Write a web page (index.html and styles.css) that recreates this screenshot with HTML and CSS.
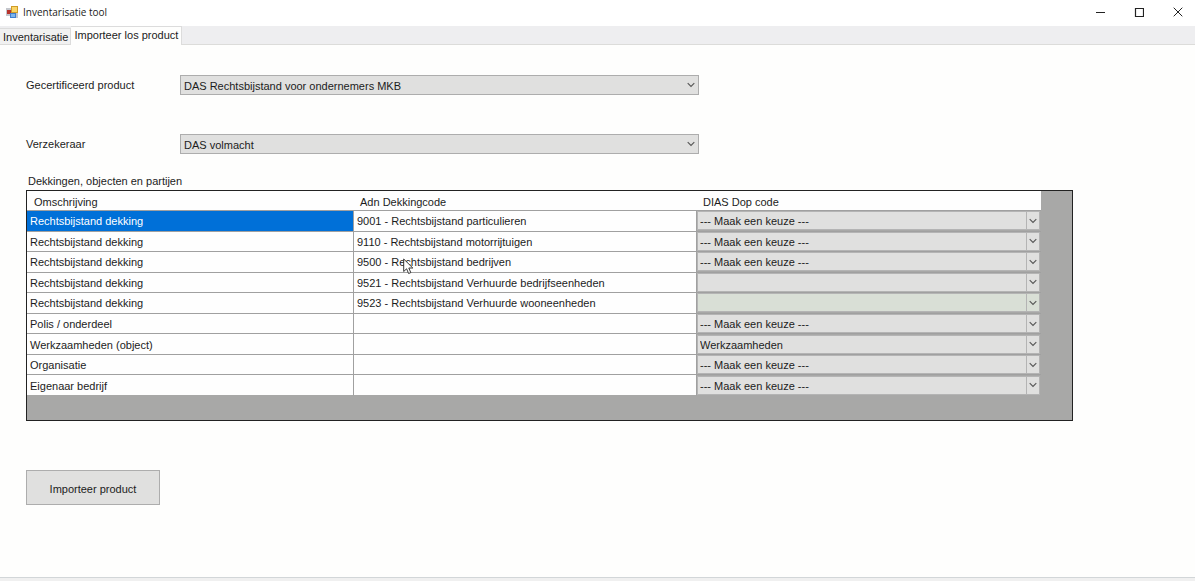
FILE: index.html
```html
<!DOCTYPE html>
<html lang="nl">
<head>
<meta charset="utf-8">
<title>Inventarisatie tool</title>
<link rel="stylesheet" href="styles.css">
</head>
<body>
<svg class="defs" aria-hidden="true"><symbol id="chevron" viewBox="0 0 8 6"><path d="M.7 1.200 4 4.500 7.300 1.200" fill="none" stroke="#555" stroke-width="1.100"/></symbol></svg>
<div class="window">
  <header class="titlebar">
    <svg class="app-icon" viewBox="0 0 12 12" aria-hidden="true">
      <rect x="0" y="2" width="6" height="8" fill="#c4c6cc"/>
      <rect x="1" y="4" width="4" height="4" fill="#b8342c"/>
      <rect x="5" y="0" width="7" height="7" fill="#cf9c28"/>
      <rect x="6" y="1" width="5" height="5" fill="#fbd667"/>
      <rect x="4" y="7" width="6" height="5" fill="#3f7fd0"/>
      <rect x="5" y="8" width="4" height="3" fill="#7db4ec"/>
      <rect x="10" y="7" width="2" height="5" fill="#c4c6cc"/>
    </svg>
    <h1 class="title">Inventarisatie tool</h1>
    <div class="window-controls">
      <button class="control" type="button" aria-label="Minimaliseren"><svg viewBox="0 0 10 10"><path d="M1 5.500h9" stroke="#222"/></svg></button>
      <button class="control" type="button" aria-label="Maximaliseren"><svg viewBox="0 0 10 10"><path d="M1.500 1.500h8v8h-8z" fill="none" stroke="#222" stroke-width="1.200"/></svg></button>
      <button class="control" type="button" aria-label="Sluiten"><svg viewBox="0 0 10 10"><path d="M.7.7 9.300 9.300M9.300.7.7 9.300" stroke="#222"/></svg></button>
    </div>
  </header>
  <nav class="tabs" role="tablist">
    <button class="tab" type="button" role="tab" aria-selected="false">Inventarisatie</button>
    <button class="tab tab-active" type="button" role="tab" aria-selected="true">Importeer los product</button>
  </nav>
  <main class="page">
    <div class="field">
      <label class="field-label" for="product">Gecertificeerd product</label>
      <div class="combo"><select id="product"><option>DAS Rechtsbijstand voor ondernemers MKB</option></select><svg class="chevron"><use href="#chevron"/></svg></div>
    </div>
    <div class="field">
      <label class="field-label" for="insurer">Verzekeraar</label>
      <div class="combo"><select id="insurer"><option>DAS volmacht</option></select><svg class="chevron"><use href="#chevron"/></svg></div>
    </div>
    <h2 class="grid-title" id="grid-title">Dekkingen, objecten en partijen</h2>
    <div class="grid">
      <table class="data" aria-labelledby="grid-title">
        <colgroup><col class="col-name"><col class="col-code"><col></colgroup>
        <thead><tr><th>Omschrijving</th><th>Adn Dekkingcode</th><th>DIAS Dop code</th></tr></thead>
        <tbody>
          <tr><td class="selected">Rechtsbijstand dekking</td><td>9001 - Rechtsbijstand particulieren</td><td class="pick"><div class="combo cell-combo"><select aria-label="DIAS Dop code 1"><option>--- Maak een keuze ---</option></select><svg class="chevron"><use href="#chevron"/></svg></div></td></tr>
          <tr><td>Rechtsbijstand dekking</td><td>9110 - Rechtsbijstand motorrijtuigen</td><td class="pick"><div class="combo cell-combo"><select aria-label="DIAS Dop code 2"><option>--- Maak een keuze ---</option></select><svg class="chevron"><use href="#chevron"/></svg></div></td></tr>
          <tr><td>Rechtsbijstand dekking</td><td><span class="pointed">9500 - Rechtsbijstand bedrijven<svg class="cursor" viewBox="0 0 11 17" aria-hidden="true"><path d="M.7 1v12.500l2.900-2.700 2 4.700 2.200-.9-2-4.600h4z" fill="#fff" stroke="#222" stroke-width=".9"/></svg></span></td><td class="pick"><div class="combo cell-combo"><select aria-label="DIAS Dop code 3"><option>--- Maak een keuze ---</option></select><svg class="chevron"><use href="#chevron"/></svg></div></td></tr>
          <tr><td>Rechtsbijstand dekking</td><td>9521 - Rechtsbijstand Verhuurde bedrijfseenheden</td><td class="pick"><div class="combo cell-combo"><select aria-label="DIAS Dop code 4"><option></option></select><svg class="chevron"><use href="#chevron"/></svg></div></td></tr>
          <tr><td>Rechtsbijstand dekking</td><td>9523 - Rechtsbijstand Verhuurde wooneenheden</td><td class="pick"><div class="combo cell-combo tinted"><select aria-label="DIAS Dop code 5"><option></option></select><svg class="chevron"><use href="#chevron"/></svg></div></td></tr>
          <tr><td>Polis / onderdeel</td><td></td><td class="pick"><div class="combo cell-combo"><select aria-label="DIAS Dop code 6"><option>--- Maak een keuze ---</option></select><svg class="chevron"><use href="#chevron"/></svg></div></td></tr>
          <tr><td>Werkzaamheden (object)</td><td></td><td class="pick"><div class="combo cell-combo"><select aria-label="DIAS Dop code 7"><option>Werkzaamheden</option></select><svg class="chevron"><use href="#chevron"/></svg></div></td></tr>
          <tr><td>Organisatie</td><td></td><td class="pick"><div class="combo cell-combo"><select aria-label="DIAS Dop code 8"><option>--- Maak een keuze ---</option></select><svg class="chevron"><use href="#chevron"/></svg></div></td></tr>
          <tr><td>Eigenaar bedrijf</td><td></td><td class="pick"><div class="combo cell-combo"><select aria-label="DIAS Dop code 9"><option>--- Maak een keuze ---</option></select><svg class="chevron"><use href="#chevron"/></svg></div></td></tr>
        </tbody>
      </table>
    </div>
    <button class="import" type="button">Importeer product</button>
  </main>
  <footer class="edge"></footer>
</div>
</body>
</html>
```
FILE: styles.css
```css
* { box-sizing: border-box; }
body {
  margin: 0;
  background: #fefefd;
  color: #1c1c1c;
  font: 11px/14px "Liberation Sans", Arial, sans-serif;
}
button, select { font: inherit; color: inherit; border-radius: 0; }
h1, h2 { margin: 0; font: inherit; }
.defs { display: none; }
.window { display: flex; flex-direction: column; min-height: 100vh; }

.titlebar { display: flex; align-items: center; height: 26px; padding: 0 0 2px 6px; background: #fff; }
.app-icon { width: 12px; height: 12px; margin-right: 5px; }
.title { font-family: "Open Sans", "Noto Sans", sans-serif; font-size: 10px; line-height: 14px; }
.window-controls { display: flex; align-self: stretch; margin-left: auto; }
.control {
  display: flex; align-items: center; justify-content: center;
  width: 39px; padding: 0 0 0 4px; border: 0; background: none;
}
.control svg { width: 10px; height: 10px; }

.tabs { display: flex; align-items: flex-end; height: 19px; background: #eeeef0; border-bottom: 1px solid #dcdcda; }
.tab { height: 16px; padding: 0 2px 0 3px; border: 1px solid #dcdcdc; border-width: 1px 1px 0 0; background: #f1f1f1; white-space: nowrap; }
.tab-active { height: 19px; margin-bottom: -1px; padding: 0 3px 2px; background: #fefefd; }

.page { flex: 1; padding: 30px 122px 24px 26px; }
.field { display: flex; align-items: center; margin-bottom: 39px; }
.field-label { width: 154px; flex: none; }
.combo { display: grid; grid-template-columns: 1fr 16px; align-items: center; flex: 0 1 519px; min-width: 0; height: 20px; }
.combo select {
  grid-area: 1 / 1 / 2 / 3; width: 100%; height: 100%; min-width: 0;
  padding: 1px 16px 0 3px; border: 1px solid #adadad; background: #e0e0df;
  appearance: none;
}
.chevron { grid-area: 1 / 2 / 2 / 3; justify-self: center; width: 8px; height: 6px; pointer-events: none; }

.grid-title { margin: -19px 0 2px 2px; }
.grid { padding: 0 31px 24px 0; border: 1px solid #222; background: #a8a8a7; }
.data { width: 100%; height: 205px; table-layout: fixed; border-collapse: separate; border-spacing: 0; background: #fefefe; }
.col-name { width: 327px; }
.col-code { width: 343px; }
.data th { height: 20px; padding: 2px 6px 0; border-bottom: 1px solid #a0a0a0; font-weight: normal; text-align: left; }
.data th:first-child { padding-left: 7px; }
.data td { padding: 1px 3px 0; border: 1px solid #a0a0a0; border-width: 0 1px 1px 0; white-space: nowrap; }
.data tr:last-child td { border-bottom-color: #a8a8a7; }
.data .selected { background: #0070d8; color: #fff; }
.data .pick { padding: 0 1px 0 0; background: #a8a8a7; border-right: 0; }
.data .cell-combo { grid-template-columns: 1fr 14px; height: 19px; }
.cell-combo select { padding: 1px 14px 0 2px; border-color: #b4b4b4; }
.cell-combo::after { content: ""; grid-area: 1 / 2 / 2 / 3; height: 19px; border-left: 1px solid #b4b4b4; pointer-events: none; }
.combo.tinted select { background: #d9dfd6; }

.pointed { position: relative; }
.cursor { position: absolute; left: 46px; top: 2px; width: 11px; height: 17px; }

.import { display: block; width: 134px; height: 35px; margin-top: 49px; padding: 3px 0 0; border: 1px solid #adadad; background: #e0e0df; }
.edge { height: 4px; border-top: 1px solid #d2d6d8; background: #f0f0f0; }
```
